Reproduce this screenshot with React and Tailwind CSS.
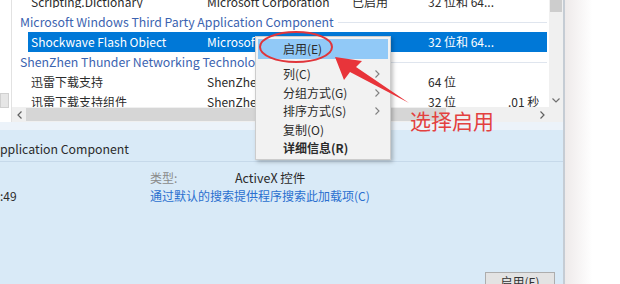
import React from "react";

const F = { fontFamily: '"Noto Sans CJK SC", "Noto Sans", sans-serif' };

function Row({ cells, selected }) {
  return (
    <div
      className={
        "h-[20px] flex items-center ml-[16px] mr-[2px] pl-[3px] " +
        (selected ? "bg-[#0078d7] text-white" : "text-[#2b2b2b]")
      }
    >
      <div className="w-[176px] shrink-0 whitespace-nowrap overflow-hidden">{cells[0]}</div>
      <div className="w-[145px] shrink-0 whitespace-nowrap overflow-hidden">{cells[1]}</div>
      <div className="w-[76px] shrink-0 whitespace-nowrap overflow-hidden">{cells[2]}</div>
      <div className="w-[80px] shrink-0 whitespace-nowrap overflow-hidden">{cells[3]}</div>
      <div className="flex-1 whitespace-nowrap overflow-hidden">{cells[4]}</div>
    </div>
  );
}

function Group({ title }) {
  return (
    <div className="h-[20px] flex items-center pl-[8px] pr-[2px] gap-[4px]">
      <span className="text-[#3b63b0] text-[12.3px] whitespace-nowrap">{title}</span>
      <div className="flex-1 h-px bg-[#dfe5ee]" />
    </div>
  );
}

export default function App() {
  return (
    <div className="relative w-[620px] h-[284px] overflow-hidden flex bg-white text-[12px] leading-none" style={F}>
      {/* window */}
      <div className="w-[565px] shrink-0 flex flex-col border-r-2 border-[#c5ccd4]">
        {/* top list */}
        <div className="h-[122px] flex">
          <div className="w-[12px] shrink-0 border-r border-[#e2e2e2] flex flex-col pt-[93px]">
            <div className="h-[15px] w-[9px] bg-[#e6e6e6] border border-[#d0d0d0]" />
          </div>
          <div className="flex-1 flex flex-col">
            <div className="h-[107px] flex">
              <div className="flex-1 overflow-hidden">
                <div className="-mt-[8px]">
                  <Row cells={["Scripting.Dictionary", "Microsoft Corporation", "已启用", "32 位和 64...", ""]} />
                  <Group title="Microsoft Windows Third Party Application Component" />
                  <Row selected cells={["Shockwave Flash Object", "Microsoft Corporation", "已启用", "32 位和 64...", ""]} />
                  <Group title="ShenZhen Thunder Networking Technologies Ltd." />
                  <Row cells={["迅雷下载支持", "ShenZhen Thunder", "", "64 位", ""]} />
                  <Row cells={["讯雷下载支持组件", "ShenZhen Thunder", "", "32 位", ".01 秒"]} />
                </div>
              </div>
              <div className="w-[14px] shrink-0 bg-[#f0f0f0] flex flex-col">
                <div className="h-[12px] bg-[#cdcdcd] mx-[1px]" />
                <div className="flex-1" />
                <div className="h-[14px] flex items-center justify-center">
                  <svg width="8" height="5" viewBox="0 0 8 5"><path d="M0.5 0.5 L4 4 L7.5 0.5" fill="none" stroke="#707070" strokeWidth="1.2" /></svg>
                </div>
              </div>
            </div>
            <div className="h-[15px] flex bg-[#f0f0f0]">
              <div className="w-[14px] flex items-center justify-center">
                <svg width="5" height="8" viewBox="0 0 5 8"><path d="M4.5 0.5 L1 4 L4.5 7.5" fill="none" stroke="#606060" strokeWidth="1.2" /></svg>
              </div>
              <div className="w-[420px] bg-[#d6d6d6] my-[1px]" />
              <div className="flex-1" />
              <div className="w-[14px] flex items-center justify-center">
                <svg width="5" height="8" viewBox="0 0 5 8"><path d="M0.5 0.5 L4 4 L0.5 7.5" fill="none" stroke="#606060" strokeWidth="1.2" /></svg>
              </div>
              <div className="w-[14px]" />
            </div>
          </div>
        </div>
        {/* detail pane */}
        <div className="flex-1 bg-[#d9eaf7] border-t-[8px] border-[#ecf3fa] flex flex-col">
          <div className="h-[32px] flex items-end pb-[6px] text-[12.3px] text-[#2b2b2b] border-b border-[#c6d9ea] whitespace-nowrap">
            pplication Component
          </div>
          <div className="flex pt-[7px]">
            <div className="w-[150px] shrink-0 flex flex-col">
              <div className="h-[18px]" />
              <div className="h-[18px] flex items-center text-[#2b2b2b]">:49</div>
            </div>
            <div className="flex flex-col">
              <div className="h-[18px] flex items-center">
                <span className="w-[85px] text-[#8a8a8a]">类型:</span>
                <span className="text-[#2b2b2b] text-[12.5px]">ActiveX 控件</span>
              </div>
              <div className="h-[18px] flex items-center text-[#2a6fcf]">通过默认的搜索提供程序搜索此加载项(C)</div>
            </div>
          </div>
          <div className="flex-1" />
          <div className="flex justify-end pr-[8px]">
            <div className="w-[70px] h-[12px] bg-[#e3e3e3] border border-[#adadad] border-b-0 flex justify-center pt-[3px] text-[12px] text-[#333] overflow-hidden">
              启用(E)
            </div>
          </div>
        </div>
      </div>
      {/* outside */}
      <div className="flex-1 bg-gradient-to-r from-[#eeeaea] via-white to-white" />

      {/* context menu */}
      <div className="absolute left-[255px] top-[36px] w-[136px] h-[124px] bg-[#f2f2f2] border border-[#cccccc] shadow-[2px_2px_4px_rgba(0,0,0,0.25)] py-[2px] px-[2px] text-[#2b2b2b]">
        <div className="h-[20px] bg-[#91c9f7] flex items-center pl-[25px]">启用(E)</div>
        <div className="h-[6px]" />
        {["列(C)", "分组方式(G)", "排序方式(S)"].map((t) => (
          <div key={t} className="h-[18.5px] flex items-center pl-[25px] pr-[8px] justify-between">
            <span>{t}</span>
            <svg width="5" height="8" viewBox="0 0 5 8"><path d="M0.5 0.5 L4 4 L0.5 7.5" fill="none" stroke="#808080" strokeWidth="1.1" /></svg>
          </div>
        ))}
        <div className="h-[18.5px] flex items-center pl-[25px]">复制(O)</div>
        <div className="h-[18.5px] flex items-center pl-[25px] font-bold">详细信息(R)</div>
      </div>

      {/* annotation */}
      <svg className="absolute inset-0 pointer-events-none" width="620" height="284" viewBox="0 0 620 284">
        <ellipse cx="296" cy="47" rx="36" ry="15" fill="none" stroke="#e0353b" strokeWidth="2" />
        <polygon points="335,57 362,61 356,67 409,103 350,72 344,80" fill="#e8343a" />
      </svg>
      <div className="absolute left-[410px] top-[110px] text-[21px] text-[#e3413f] leading-none" style={F}>选择启用</div>
    </div>
  );
}
